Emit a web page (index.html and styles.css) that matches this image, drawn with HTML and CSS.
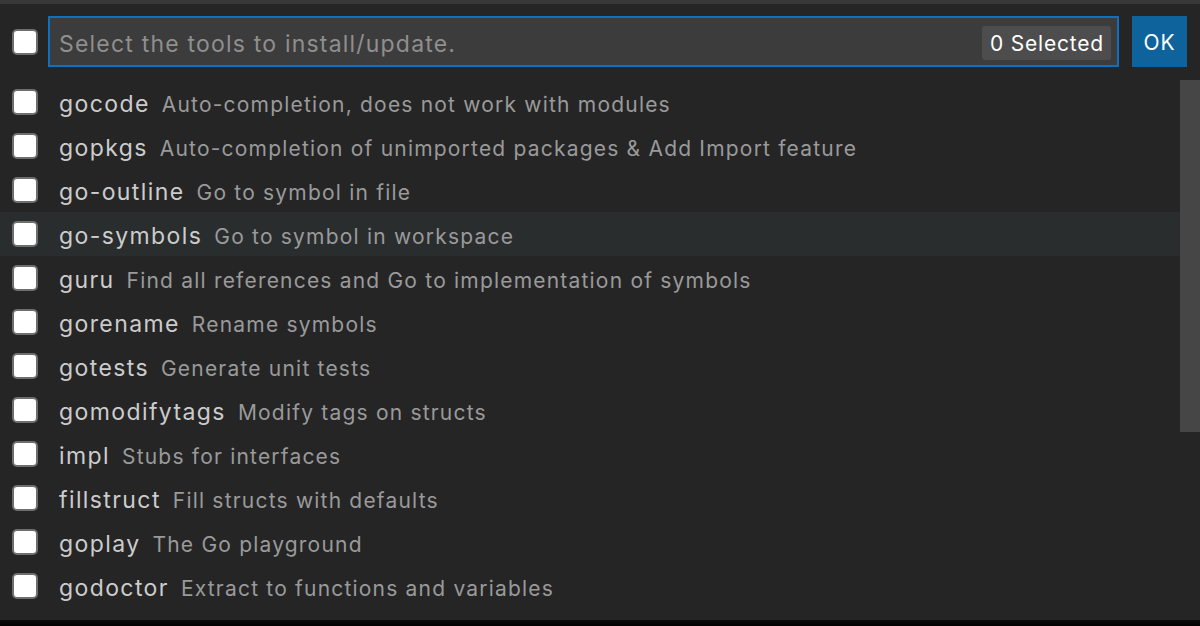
FILE: index.html
```html
<!DOCTYPE html>
<html lang="en">
<head>
    <meta charset="UTF-8">
    <title>Go: Install/Update Tools</title>
    <link rel="stylesheet" href="styles.css">
</head>
<body>
    <div class="top-strip"></div>
    <div class="quick-pick">
        <div class="header">
            <span class="check"></span>
            <div class="input-box">
                <span class="placeholder">Select the tools to install/update.</span>
                <span class="count">0 Selected</span>
            </div>
            <button class="ok">OK</button>
        </div>
        <div class="list-wrap">
            <div class="list">
                <div class="row"><span class="check"></span><span class="label">gocode</span><span class="desc">Auto-completion, does not work with modules</span></div>
                <div class="row"><span class="check"></span><span class="label">gopkgs</span><span class="desc">Auto-completion of unimported packages &amp; Add Import feature</span></div>
                <div class="row"><span class="check"></span><span class="label">go-outline</span><span class="desc">Go to symbol in file</span></div>
                <div class="row hover"><span class="check"></span><span class="label">go-symbols</span><span class="desc">Go to symbol in workspace</span></div>
                <div class="row"><span class="check"></span><span class="label">guru</span><span class="desc">Find all references and Go to implementation of symbols</span></div>
                <div class="row"><span class="check"></span><span class="label">gorename</span><span class="desc">Rename symbols</span></div>
                <div class="row"><span class="check"></span><span class="label">gotests</span><span class="desc">Generate unit tests</span></div>
                <div class="row"><span class="check"></span><span class="label">gomodifytags</span><span class="desc">Modify tags on structs</span></div>
                <div class="row"><span class="check"></span><span class="label">impl</span><span class="desc">Stubs for interfaces</span></div>
                <div class="row"><span class="check"></span><span class="label">fillstruct</span><span class="desc">Fill structs with defaults</span></div>
                <div class="row"><span class="check"></span><span class="label">goplay</span><span class="desc">The Go playground</span></div>
                <div class="row"><span class="check"></span><span class="label">godoctor</span><span class="desc">Extract to functions and variables</span></div>
            </div>
            <div class="scrollbar"></div>
        </div>
    </div>
    <div class="shadow"></div>
</body>
</html>
```

FILE: styles.css
```css
body {
    margin: 0;
    background: #252526;
    font-family: Inter, "Noto Sans", sans-serif;
    color: #cccccc;
    height: 626px;
    overflow: hidden;
    display: flex;
    flex-direction: column;
}
.top-strip {
    height: 4px;
    background: #383838;
}
.quick-pick {
    flex-grow: 1;
}
.header {
    display: flex;
    align-items: center;
    padding: 12px 13px 0 12px;
    height: 51px;
}
.check {
    width: 22px;
    height: 22px;
    background: #ffffff;
    border: 2px solid #6e6e6e;
    border-radius: 5px;
    flex-shrink: 0;
}
.input-box {
    flex-grow: 1;
    margin-left: 10px;
    height: 47px;
    background: #3c3c3c;
    border: 2px solid #0e70c0;
    display: flex;
    align-items: center;
    padding: 0 6px 0 9px;
}
.placeholder {
    flex-grow: 1;
    font-size: 23px;
    letter-spacing: 1.2px;
    color: #8f8f8f;
    padding-top: 4px;
}
.count {
    background: #4d4d4d;
    color: #ffffff;
    font-size: 21px;
    letter-spacing: 0.8px;
    padding: 5px 7px 3px 8px;
    margin-top: 2px;
    border-radius: 3px;
    line-height: 26px;
}
.ok {
    margin-left: 13px;
    width: 55px;
    height: 51px;
    background: #0e639c;
    color: #ffffff;
    border: none;
    font-family: inherit;
    font-size: 21px;
    letter-spacing: 1px;
    padding: 2px 0 0;
}
.list-wrap {
    display: flex;
    margin-top: 13px;
}
.list {
    flex-grow: 1;
}
.row {
    height: 44px;
    display: flex;
    align-items: center;
    padding-left: 12px;
}
.row.hover {
    background: #2a2d2e;
}
.label {
    margin-left: 21px;
    font-size: 23px;
    letter-spacing: 1.4px;
    color: #cccccc;
    padding-top: 4px;
}
.desc {
    margin-left: 12px;
    font-size: 21px;
    letter-spacing: 1.2px;
    color: #9a9a9a;
    padding-top: 4px;
}
.scrollbar {
    width: 20px;
    height: 352px;
    background: rgba(121, 121, 121, 0.4);
}
.shadow {
    height: 6px;
    background: linear-gradient(#0a0a0a, #000000);
}
```
